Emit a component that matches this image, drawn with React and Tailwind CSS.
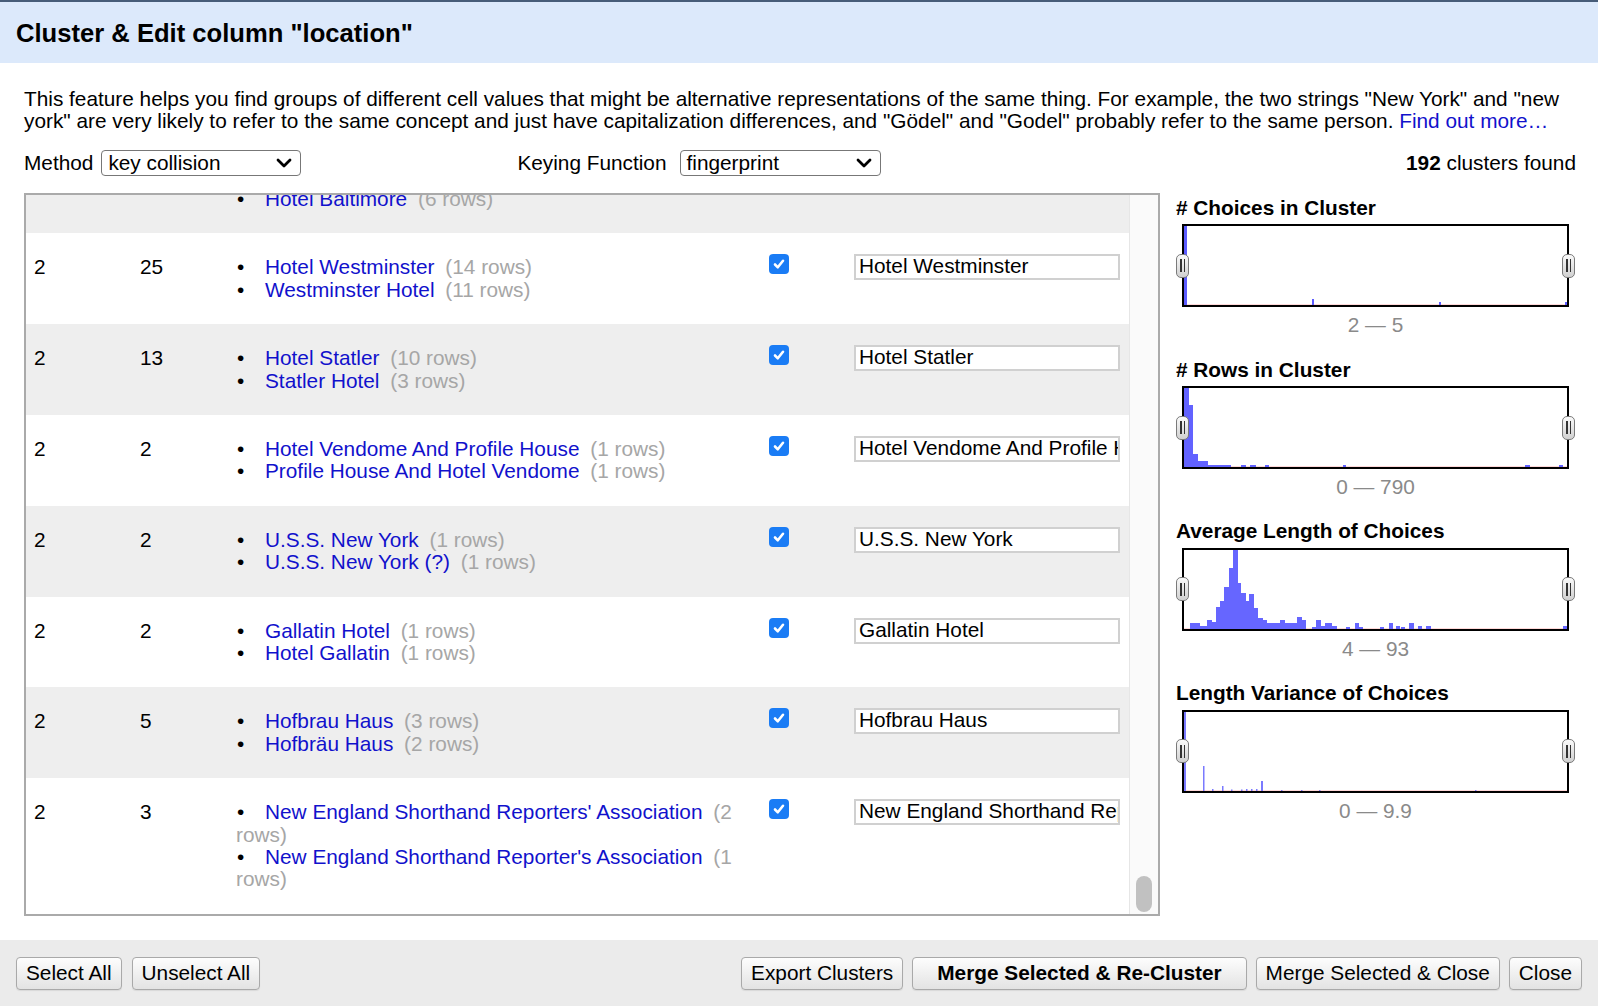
import React from "react";

const rows = [
  { size: 2, count: 12, choices: [["Baltimore Hotel", 6], ["Hotel Baltimore", 6]], value: "Hotel Baltimore" },
  { size: 2, count: 25, choices: [["Hotel Westminster", 14], ["Westminster Hotel", 11]], value: "Hotel Westminster" },
  { size: 2, count: 13, choices: [["Hotel Statler", 10], ["Statler Hotel", 3]], value: "Hotel Statler" },
  { size: 2, count: 2, choices: [["Hotel Vendome And Profile House", 1], ["Profile House And Hotel Vendome", 1]], value: "Hotel Vendome And Profile House" },
  { size: 2, count: 2, choices: [["U.S.S. New York", 1], ["U.S.S. New York (?)", 1]], value: "U.S.S. New York" },
  { size: 2, count: 2, choices: [["Gallatin Hotel", 1], ["Hotel Gallatin", 1]], value: "Gallatin Hotel" },
  { size: 2, count: 5, choices: [["Hofbrau Haus", 3], ["Hofbräu Haus", 2]], value: "Hofbrau Haus" },
  {
    size: 2,
    count: 3,
    choices: [
      ["New England Shorthand Reporters' Association", 2],
      ["New England Shorthand Reporter's Association", 1],
    ],
    value: "New England Shorthand Reporters' Association",
  },
];

const choicesBars = [
  [0, 3, 79],
  [128, 130, 6],
  [255, 257, 3],
  [381, 383, 3],
];
const rowsBars = [
  [0, 5, 79],
  [5, 9, 62],
  [9, 14, 13],
  [14, 24, 6],
  [24, 47, 2],
  [57, 62, 2],
  [66, 72, 2],
  [81, 85, 2],
  [159, 162, 2],
  [341, 346, 2],
  [375, 379, 2],
];
const avgBars = [
  [6, 16, 6], [16, 23, 3], [23, 28, 9], [28, 32, 7], [32, 36, 22], [36, 40, 28], [40, 45, 42],
  [45, 49, 61], [49, 54, 79], [54, 57, 46], [57, 62, 36], [62, 65, 28], [65, 70, 35], [70, 74, 21],
  [74, 79, 11], [79, 83, 9], [83, 88, 6], [88, 96, 6], [96, 101, 9], [101, 113, 6], [113, 118, 12],
  [118, 122, 9], [128, 132, 2], [132, 137, 9], [137, 141, 3], [141, 144, 6], [144, 148, 6], [148, 153, 3],
  [162, 166, 2], [171, 175, 6], [175, 179, 2], [196, 200, 2], [205, 209, 6], [212, 216, 3], [217, 221, 2],
  [225, 230, 6], [234, 238, 3], [242, 247, 3], [379, 383, 3],
];
const varBars = [
  [0, 2, 79], [19, 20.5, 25], [28, 29.5, 2], [38, 39.5, 5], [47, 48.5, 1.5], [57, 58.5, 1.5],
  [62, 63.5, 2], [67, 68.5, 2], [72, 73.5, 2], [77, 79, 10], [97, 98.5, 1], [117, 118.5, 1],
  [135, 136.5, 1], [291, 292.5, 1],
];

function Handle({ side }) {
  return (
    <div
      className={
        "absolute top-1/2 -translate-y-1/2 w-[13px] h-[24px] rounded-[5px] border border-[#7a7a7a] bg-linear-to-b from-[#fafafa] to-[#d0d0d0] flex items-center justify-center gap-[2px] " +
        (side === "left" ? "left-[-8px]" : "right-[-8px]")
      }
    >
      <span className="block w-[1.5px] h-[13px] bg-[#333]" />
      <span className="block w-[1.5px] h-[13px] bg-[#333]" />
    </div>
  );
}

function Histogram({ title, bars, color, range }) {
  return (
    <div className="mb-[22px]">
      <div className="font-bold leading-[22.4px]">{title}</div>
      <div className="relative mt-[5px] ml-[6px] h-[83px] w-[387px] border-2 border-black bg-white">
        <svg className="absolute inset-0 h-full w-full" viewBox="0 0 383 79" preserveAspectRatio="none">
          <rect x="0" y="78" width="383" height="1" fill="#ffd9d9" />
          {bars.map(([x0, x1, h], i) => (
            <rect key={i} x={x0} y={79 - h} width={x1 - x0} height={h} fill={color} />
          ))}
        </svg>
        <Handle side="left" />
        <Handle side="right" />
      </div>
      <div className="mt-[7px] ml-[6px] w-[387px] text-center leading-[22.4px] text-[#8a8a8a]">{range}</div>
    </div>
  );
}

function Chevron() {
  return (
    <svg width="16" height="10" viewBox="0 0 16 10" className="shrink-0">
      <path d="M2 2 L8 8 L14 2" fill="none" stroke="#000" strokeWidth="2.8" strokeLinecap="round" strokeLinejoin="round" />
    </svg>
  );
}

function Select({ value, width }) {
  return (
    <div
      className={
        "flex h-[26px] items-center justify-between rounded-[4px] border-[1.5px] border-[#777] bg-white pl-[6px] pr-[8px] " + width
      }
    >
      <span className="leading-[22.4px]">{value}</span>
      <Chevron />
    </div>
  );
}

function Checkbox() {
  return (
    <div className="ml-[33px] mt-[-2px] flex h-[20px] w-[20px] items-center justify-center rounded-[4px] bg-[#1a7cf5]">
      <svg width="14" height="14" viewBox="0 0 14 14">
        <path d="M3 7.5 L5.8 10.3 L11 3.8" fill="none" stroke="#fff" strokeWidth="2.6" strokeLinecap="round" strokeLinejoin="round" />
      </svg>
    </div>
  );
}

function Row({ row, gray }) {
  return (
    <div
      className={
        "grid shrink-0 grid-cols-[106px_96px_500px_118px_266px] items-start py-[23px] pl-[8px] leading-[22.4px] " +
        (gray ? "bg-[#eeeeee]" : "bg-white")
      }
    >
      <div>{row.size}</div>
      <div>{row.count}</div>
      <ul>
        {row.choices.map(([name, n], i) => (
          <li key={i}>
            <span className="inline-block w-[29px] pl-[1px]">•</span>
            <a className="text-[#1111cc]">{name}</a>{" "}
            <span className="ml-[5px] text-[#a6a6a6]">({n} rows)</span>
          </li>
        ))}
      </ul>
      <div>
        <Checkbox />
      </div>
      <div className="mt-[-2px] h-[26px] overflow-hidden whitespace-nowrap border-2 border-[#d0d0d0] bg-white pl-[3px] leading-[20px]">
        {row.value}
      </div>
    </div>
  );
}

function Button({ children, bold, wide }) {
  return (
    <button
      className={
        "h-[33px] rounded-[4px] border border-[#a9a9a9] bg-linear-to-b from-[#fdfdfd] to-[#e3e3e3] leading-[22px] text-black shadow-[0_1px_1px_rgba(0,0,0,0.08)] " +
        (bold ? "font-bold " : "") +
        (wide ? "px-[24px]" : "px-[9px]")
      }
    >
      {children}
    </button>
  );
}

export default function App() {
  return (
    <div className="flex h-[1006px] w-[1598px] flex-col overflow-hidden bg-white font-['Liberation_Sans',Arial,sans-serif] text-[20.8px] text-black">
      <div className="flex h-[63px] shrink-0 items-center border-t-2 border-[#475c78] bg-[#dce9fb] pl-[16px] pt-[2px]">
        <h1 className="text-[25.6px] font-bold leading-none">Cluster &amp; Edit column "location"</h1>
      </div>

      <div className="flex flex-1 flex-col px-[24px] pt-[25px]">
        <p className="leading-[22.4px]">
          This feature helps you find groups of different cell values that might be alternative representations of the
          same thing. For example, the two strings "New York" and "new york" are very likely to refer to the same concept
          and just have capitalization differences, and "Gödel" and "Godel" probably refer to the same person.{" "}
          <a className="text-[#1111cc]">Find out more…</a>
        </p>

        <div className="mt-[17px] flex h-[26px] items-center">
          <span className="mr-[8px]">Method</span>
          <Select value="key collision" width="w-[200px]" />
          <span className="ml-[216px] mr-[13px]">Keying Function</span>
          <Select value="fingerprint" width="w-[201px]" />
          <span className="ml-auto mr-[-2px]">
            <b>192</b> clusters found
          </span>
        </div>

        <div className="mt-[17px] flex">
          <div className="flex h-[723px] w-[1136px] shrink-0 border-2 border-[#aaaaaa]">
            <div className="flex min-w-0 flex-1 flex-col justify-end overflow-hidden">
              {rows.map((r, i) => (
                <Row key={i} row={r} gray={i % 2 === 0} />
              ))}
            </div>
            <div className="flex w-[29px] shrink-0 flex-col items-center justify-end border-l border-[#e6e6e6] bg-[#fafafa] pb-[2px]">
              <div className="h-[36px] w-[16px] rounded-full bg-[#c1c1c1]" />
            </div>
          </div>

          <div className="flex-1 pl-[16px] pt-[4px]">
            <Histogram title="# Choices in Cluster" bars={choicesBars} color="#5c5cff" range="2 — 5" />
            <Histogram title="# Rows in Cluster" bars={rowsBars} color="#6262ff" range="0 — 790" />
            <Histogram title="Average Length of Choices" bars={avgBars} color="#6666ff" range="4 — 93" />
            <Histogram title="Length Variance of Choices" bars={varBars} color="#7a7aff" range="0 — 9.9" />
          </div>
        </div>
      </div>

      <div className="flex h-[66px] shrink-0 items-center justify-between bg-[#ebebeb] px-[16px]">
        <div className="flex gap-[10px]">
          <Button>Select All</Button>
          <Button>Unselect All</Button>
        </div>
        <div className="flex gap-[9px]">
          <Button>Export Clusters</Button>
          <Button bold wide>
            Merge Selected &amp; Re-Cluster
          </Button>
          <Button>Merge Selected &amp; Close</Button>
          <Button>Close</Button>
        </div>
      </div>
    </div>
  );
}
